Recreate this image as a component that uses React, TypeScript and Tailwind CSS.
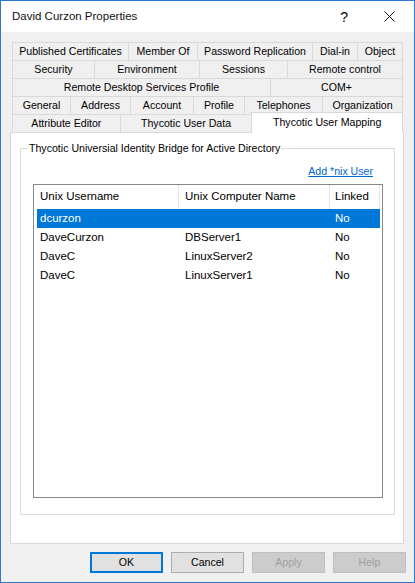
import React from 'react';

const tabRows: { label: string; w: string }[][] = [
  [
    { label: 'Published Certificates', w: 'w-[116px]' },
    { label: 'Member Of', w: 'w-[69px]' },
    { label: 'Password Replication', w: 'w-[115px]' },
    { label: 'Dial-in', w: 'w-[45px]' },
    { label: 'Object', w: 'w-[46px] border-r' },
  ],
  [
    { label: 'Security', w: 'w-[82px]' },
    { label: 'Environment', w: 'w-[105px]' },
    { label: 'Sessions', w: 'w-[88px]' },
    { label: 'Remote control', w: 'w-[116px] border-r' },
  ],
  [
    { label: 'Remote Desktop Services Profile', w: 'w-[258px]' },
    { label: 'COM+', w: 'w-[133px] border-r' },
  ],
  [
    { label: 'General', w: 'w-[58px]' },
    { label: 'Address', w: 'w-[60px]' },
    { label: 'Account', w: 'w-[63px]' },
    { label: 'Profile', w: 'w-[51px]' },
    { label: 'Telephones', w: 'w-[78px]' },
    { label: 'Organization', w: 'w-[81px] border-r' },
  ],
];

const users = [
  { name: 'dcurzon', computer: '', linked: 'No', selected: true },
  { name: 'DaveCurzon', computer: 'DBServer1', linked: 'No' },
  { name: 'DaveC', computer: 'LinuxServer2', linked: 'No' },
  { name: 'DaveC', computer: 'LinuxServer1', linked: 'No' },
];

const Tab = ({ label, w }: { label: string; w: string }) => (
  <div className={`${w} h-[18px] border-l border-t border-[#d9d9d9] flex items-center justify-center whitespace-nowrap`}>
    {label}
  </div>
);

export default function App() {
  return (
    <div className="w-[415px] h-[583px] border border-[#2b79d0] bg-[#f0f0f0] flex flex-col font-['Liberation_Sans',Arial,sans-serif] text-[10.6px] text-black overflow-hidden">
      {/* Title bar */}
      <div className="h-[31px] bg-white flex items-center shrink-0">
        <span className="ml-[11px] text-[11.5px] text-[#111]">David Curzon Properties</span>
        <span className="ml-auto mr-[36px] text-[14px] leading-none">?</span>
        <svg className="mr-[19px]" width="11" height="11" viewBox="0 0 11 11">
          <path d="M0.5 0.5 L10.5 10.5 M10.5 0.5 L0.5 10.5" stroke="#111" strokeWidth="1" />
        </svg>
      </div>

      <div className="pl-[9px] pt-[10px]">
        {/* Tab rows */}
        <div className="ml-[2px] w-[391px]">
          {tabRows.map((row, i) => (
            <div key={i} className="flex">
              {row.map((t) => (
                <Tab key={t.label} label={t.label} w={t.w} />
              ))}
            </div>
          ))}
          <div className="flex h-[18px]">
            <Tab label="Attribute Editor" w="w-[108px]" />
            <Tab label="Thycotic User Data" w="w-[132px]" />
            <div className="relative z-10 -mt-[2px] w-[152px] h-[21px] border-l border-t border-r border-[#d9d9d9] bg-white flex items-center justify-center whitespace-nowrap">
              Thycotic User Mapping
            </div>
          </div>
        </div>

        {/* Tab page */}
        <div className="w-[394px] h-[412px] border border-[#d9d9d9] bg-white pl-[9px] pt-[15px]">
          <div className="relative w-[375px] h-[367px] border border-[#dcdcdc] flex flex-col">
            <span className="absolute left-[7px] -top-[8px] px-[1px] bg-white leading-[14px] whitespace-nowrap">
              Thycotic Universial Identity Bridge for Active Directory
            </span>
            <div className="mt-[16px] h-[13px] leading-[13px] flex justify-end pr-[21px]">
              <span className="text-[#0066cc] underline">Add *nix User</span>
            </div>

            {/* List view */}
            <div className="mt-[6px] ml-[12px] w-[350px] h-[314px] border border-[#828790] text-[11.5px]">
              <div className="flex h-[24px]">
                <div className="w-[145px] border-r border-[#e5e5e5] pl-[6px] flex items-center">Unix Username</div>
                <div className="w-[151px] border-r border-[#e5e5e5] pl-[6px] flex items-center">Unix Computer Name</div>
                <div className="w-[50px] border-r border-[#e5e5e5] pl-[5px] flex items-center">Linked</div>
              </div>
              {users.map((u, i) => (
                <div
                  key={i}
                  className={`ml-[3px] w-[343px] h-[19px] flex items-center ${u.selected ? 'bg-[#0078d7] text-white' : ''}`}
                >
                  <div className="w-[148px] pl-[3px]">{u.name}</div>
                  <div className="w-[150px]">{u.computer}</div>
                  <div>{u.linked}</div>
                </div>
              ))}
            </div>
          </div>
        </div>

        {/* Buttons */}
        <div className="mt-[8px] flex justify-end gap-[8px] pr-[8px]">
          <button className="w-[73px] h-[21px] border-2 border-[#0078d7] bg-[#e1e1e1]">OK</button>
          <button className="w-[73px] h-[21px] border border-[#adadad] bg-[#e1e1e1]">Cancel</button>
          <button className="w-[73px] h-[21px] border border-[#bfbfbf] bg-[#cccccc] text-[#a0a0a0]">Apply</button>
          <button className="w-[73px] h-[21px] border border-[#bfbfbf] bg-[#cccccc] text-[#a0a0a0]">Help</button>
        </div>
      </div>
    </div>
  );
}
